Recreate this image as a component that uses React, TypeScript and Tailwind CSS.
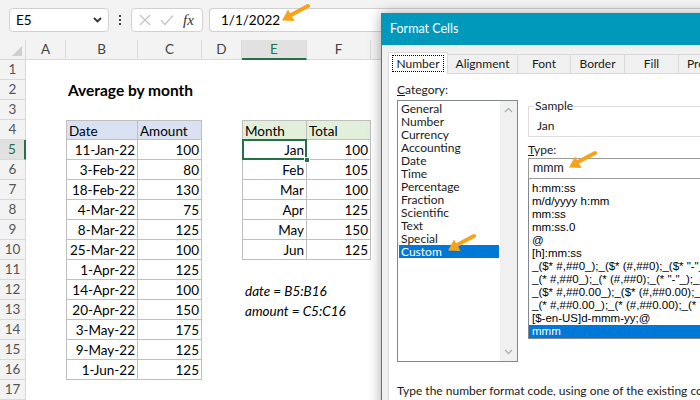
import React from "react";

type CellDef = {
  text: string;
  align?: "left" | "right";
  bold?: boolean;
  italic?: boolean;
  head?: "blue" | "green";
};

const columns = [
  { key: "A", label: "A", width: "w-[40px]" },
  { key: "B", label: "B", width: "w-[72px]" },
  { key: "C", label: "C", width: "w-[64px]" },
  { key: "D", label: "D", width: "w-[40px]" },
  { key: "E", label: "E", width: "w-[65px]" },
  { key: "F", label: "F", width: "w-[64px]" },
  { key: "G", label: "G", width: "w-[80px]" },
];

const dates = [
  ["11-Jan-22", "100"],
  ["3-Feb-22", "80"],
  ["18-Feb-22", "130"],
  ["4-Mar-22", "75"],
  ["8-Mar-22", "125"],
  ["25-Mar-22", "100"],
  ["1-Apr-22", "125"],
  ["14-Apr-22", "100"],
  ["20-Apr-22", "150"],
  ["3-May-22", "175"],
  ["9-May-22", "125"],
  ["1-Jun-22", "125"],
];

const months = [
  ["Jan", "100"],
  ["Feb", "105"],
  ["Mar", "100"],
  ["Apr", "125"],
  ["May", "150"],
  ["Jun", "125"],
];

const cells: Record<string, CellDef> = {
  B2: { text: "Average by month", bold: true },
  B4: { text: "Date", head: "blue" },
  C4: { text: "Amount", head: "blue" },
  E4: { text: "Month", head: "green" },
  F4: { text: "Total", head: "green" },
  E12: { text: "date = B5:B16", italic: true },
  E13: { text: "amount = C5:C16", italic: true },
};
dates.forEach(([d, a], i) => {
  cells[`B${i + 5}`] = { text: d, align: "right" };
  cells[`C${i + 5}`] = { text: a, align: "right" };
});
months.forEach(([m, t], i) => {
  cells[`E${i + 5}`] = { text: m, align: "right" };
  cells[`F${i + 5}`] = { text: t, align: "right" };
});

const inTable = (col: string, row: number) =>
  ((col === "B" || col === "C") && row >= 4 && row <= 16) ||
  ((col === "E" || col === "F") && row >= 4 && row <= 10);

const categories = [
  "General",
  "Number",
  "Currency",
  "Accounting",
  "Date",
  "Time",
  "Percentage",
  "Fraction",
  "Scientific",
  "Text",
  "Special",
  "Custom",
];

const formats = [
  "h:mm:ss",
  "m/d/yyyy h:mm",
  "mm:ss",
  "mm:ss.0",
  "@",
  "[h]:mm:ss",
  '_($* #,##0_);_($* (#,##0);_($* "-"_);_(@_)',
  '_(* #,##0_);_(* (#,##0);_(* "-"_);_(@_)',
  '_($* #,##0.00_);_($* (#,##0.00);_($* "-"??_);_(@_)',
  '_(* #,##0.00_);_(* (#,##0.00);_(* "-"??_);_(@_)',
  "[$-en-US]d-mmm-yy;@",
  "mmm",
];

const Arrow = ({ className }: { className: string }) => (
  <svg className={className} width="30" height="20" viewBox="0 0 30 20">
    <line x1="28" y1="3" x2="10" y2="12.5" stroke="#f6a31b" strokeWidth="4" strokeLinecap="round" />
    <polygon points="2,17.5 14.5,18 8,6.5" fill="#f6a31b" />
  </svg>
);

const Chevron = ({ up }: { up?: boolean }) => (
  <svg width="9" height="6" viewBox="0 0 9 6">
    <polyline
      points={up ? "1,5 4.5,1.5 8,5" : "1,1 4.5,4.5 8,1"}
      fill="none"
      stroke="#b0b0b0"
      strokeWidth="1.3"
    />
  </svg>
);

const SheetCell = ({ col, row, width }: { col: string; row: number; width: string }) => {
  const def = cells[`${col}${row}`];
  const table = inTable(col, row);
  let cls = `${width} shrink-0 h-[20px] relative flex items-center whitespace-nowrap px-[2px] pt-[2px]`;
  if (table) cls += " border-r border-b border-[#bfbfbf]";
  if (table && (col === "B" || col === "E")) cls += " border-l";
  if (table && row === 4) cls += " border-t";
  if (def?.align === "right") cls += " justify-end";
  if (def?.head === "blue") cls += " bg-[#d9e1f2]";
  if (def?.head === "green") cls += " bg-[#e2efda]";
  if (def?.bold) cls += " font-bold text-[15.5px]";
  if (def?.italic) cls += " italic pl-[3px]";
  const selected = col === "E" && row === 5;
  return (
    <div className={selected ? cls + " z-10" : cls}>
      {def && <span>{def.text}</span>}
      {selected && (
        <>
          <div className="absolute -inset-px border-2 border-[#217346]" />
          <div className="absolute -right-[4px] -bottom-[4px] h-[6px] w-[6px] bg-[#217346] border border-white" />
        </>
      )}
    </div>
  );
};

const FormatCells = () => (
  <div className="absolute left-[381px] top-[13px] w-[380px] h-[400px] border border-[#0099bc] bg-[#f0f0f0] shadow-[0_0_12px_rgba(0,0,0,0.35)] font-['Lato',sans-serif] text-[12px] text-[#1a1a1a]">
    <div className="h-[31px] bg-[#0099bc] text-white flex items-center pl-[8px] text-[12.5px]">
      Format Cells
    </div>
    <div className="pl-[6px] pt-[7px]">
      <div className="flex items-end h-[21px]">
        <div className="relative z-10 -mb-px h-[22px] w-[60px] bg-white border border-b-0 border-[#d9d9d9] flex items-center justify-center">
          <span className="border border-dotted border-black px-[3px] leading-[15px]">Number</span>
        </div>
        <div className="h-[19px] w-[70px] border border-l-0 border-b-0 border-[#d9d9d9] flex items-center justify-center">
          Alignment
        </div>
        <div className="h-[19px] w-[53px] border border-l-0 border-b-0 border-[#d9d9d9] flex items-center justify-center">
          Font
        </div>
        <div className="h-[19px] w-[54px] border border-l-0 border-b-0 border-[#d9d9d9] flex items-center justify-center">
          Border
        </div>
        <div className="h-[19px] w-[54px] border border-l-0 border-b-0 border-[#d9d9d9] flex items-center justify-center">
          Fill
        </div>
        <div className="h-[19px] w-[60px] border border-l-0 border-b-0 border-[#d9d9d9] flex items-center pl-[8px]">
          Protection
        </div>
      </div>
      <div className="h-[340px] bg-white border border-[#d9d9d9] pl-[8px]">
        <div className="flex gap-[10px]">
          <div className="w-[121px] shrink-0">
            <div className="mt-[9px] h-[14px] leading-[14px]">
              <span className="underline">C</span>ategory:
            </div>
            <div className="mt-[3px] h-[262px] border border-[#828790] flex">
              <div className="flex-1 p-px">
                {categories.map((c) => (
                  <div
                    key={c}
                    className={
                      c === "Custom"
                        ? "h-[13px] leading-[13px] pl-[2px] bg-[#0078d7] text-white"
                        : "h-[13px] leading-[13px] pl-[2px]"
                    }
                  >
                    {c}
                  </div>
                ))}
              </div>
              <div className="w-[17px] bg-[#f0f0f0] flex flex-col items-center justify-between py-[6px]">
                <Chevron up />
                <Chevron />
              </div>
            </div>
          </div>
          <div className="w-[220px] shrink-0">
            <div className="relative mt-[32px] h-[31px] border border-[#dcdcdc]">
              <span className="absolute -top-[9px] left-[5px] bg-white px-px leading-[16px]">Sample</span>
              <div className="pl-[8px] pt-[11px] leading-[16px]">Jan</div>
            </div>
            <div className="mt-[6px] h-[14px] leading-[14px]">
              <span className="underline">T</span>ype:
            </div>
            <div className="mt-[1px] h-[21px] border border-[#9a9a9a] flex items-center pl-[4px] text-[12.5px]">
              mmm
            </div>
            <div className="h-[160px] border border-t-0 border-[#828790] pt-[3px] font-['Liberation_Sans',sans-serif] text-[11.5px] text-black overflow-hidden">
              {formats.map((f) => (
                <div
                  key={f}
                  className={
                    f === "mmm"
                      ? "h-[13px] leading-[13px] pl-[3px] whitespace-nowrap bg-[#0078d7] text-white"
                      : "h-[13px] leading-[13px] pl-[3px] whitespace-nowrap"
                  }
                >
                  {f}
                </div>
              ))}
            </div>
          </div>
        </div>
        <div className="mt-[21px] leading-[16px] whitespace-nowrap">
          Type the number format code, using one of the existing codes as a starting point.
        </div>
      </div>
    </div>
  </div>
);

export default function App() {
  const rows = Array.from({ length: 17 }, (_, i) => i + 1);
  return (
    <div className="relative w-[700px] h-[400px] overflow-hidden bg-white font-['Lato',sans-serif] text-[13.5px] text-black">
      <div className="h-[40px] bg-[#f3f3f3] flex items-start pt-[8px]">
        <div className="ml-[9px] w-[100px] h-[24px] rounded-[4px] border border-[#d1d1d1] bg-white flex items-center justify-between pl-[6px] pr-[6px] text-[13.5px]">
          <span>E5</span>
          <svg width="9" height="6" viewBox="0 0 9 6">
            <polyline points="1,1 4.5,4.5 8,1" fill="none" stroke="#333" strokeWidth="1.8" />
          </svg>
        </div>
        <div className="w-[22px] h-[24px] flex flex-col items-center justify-center gap-[2px]">
          <div className="h-[2px] w-[2px] bg-[#444]" />
          <div className="h-[2px] w-[2px] bg-[#444]" />
          <div className="h-[2px] w-[2px] bg-[#444]" />
        </div>
        <div className="w-[72px] h-[24px] rounded-[4px] border border-[#d1d1d1] bg-white flex items-center pl-[7px] gap-[9px]">
          <svg width="12" height="12" viewBox="0 0 12 12">
            <path d="M1 1 L11 11 M11 1 L1 11" stroke="#c4c4c4" strokeWidth="1.2" />
          </svg>
          <svg width="14" height="12" viewBox="0 0 14 12">
            <path d="M1 6 L5 10.5 L13 1.5" fill="none" stroke="#c4c4c4" strokeWidth="1.2" />
          </svg>
          <span className="font-['Liberation_Serif',serif] italic text-[15px] text-[#333] leading-none">fx</span>
        </div>
        <div className="ml-[6px] flex-1 h-[24px] rounded-l-[4px] border border-r-0 border-[#d1d1d1] bg-white flex items-center pl-[11px] text-[13.5px]">
          1/1/2022
        </div>
      </div>

      <div className="flex h-[20px] bg-[#f3f3f3] text-[#444] text-[13.5px]">
        <div className="w-[26px] shrink-0 border-r border-b border-[#d9d9d9] flex items-end justify-end p-[3px]">
          <svg width="10" height="10" viewBox="0 0 10 10">
            <polygon points="10,0 10,10 0,10" fill="#cfcfcf" />
          </svg>
        </div>
        {columns.map((c) => (
          <div
            key={c.key}
            className={
              c.key === "E"
                ? `${c.width} shrink-0 border-r border-[#d9d9d9] border-b-2 border-b-[#217346] bg-[#e1e1e1] text-[#217346] flex items-center justify-center`
                : `${c.width} shrink-0 border-r border-b border-[#d9d9d9] flex items-center justify-center`
            }
          >
            {c.label}
          </div>
        ))}
        <div className="flex-1 border-b border-[#d9d9d9]" />
      </div>

      {rows.map((r) => (
        <div key={r} className="flex h-[20px]">
          <div
            className={
              r === 5
                ? "w-[26px] shrink-0 border-b border-[#d9d9d9] border-r-2 border-r-[#217346] bg-[#e1e1e1] text-[#217346] text-[13.5px] flex items-center justify-center"
                : "w-[26px] shrink-0 border-r border-b border-[#d9d9d9] bg-[#f3f3f3] text-[#555] text-[13.5px] flex items-center justify-center"
            }
          >
            {r}
          </div>
          {columns.map((c) => (
            <SheetCell key={c.key} col={c.key} row={r} width={c.width} />
          ))}
        </div>
      ))}

      <FormatCells />

      <Arrow className="absolute left-[280px] top-[3px]" />
      <Arrow className="absolute left-[446px] top-[233px]" />
      <Arrow className="absolute left-[567px] top-[150px]" />
    </div>
  );
}
